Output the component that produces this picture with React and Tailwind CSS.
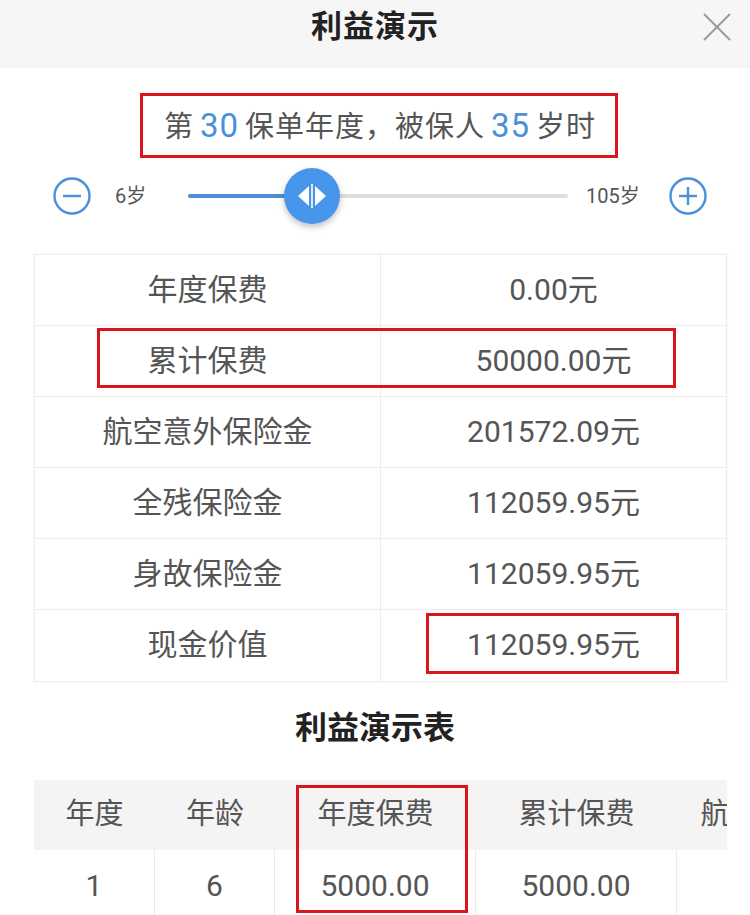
const rows = [
  ["年度保费", "0.00元"],
  ["累计保费", "50000.00元"],
  ["航空意外保险金", "201572.09元"],
  ["全残保险金", "112059.95元"],
  ["身故保险金", "112059.95元"],
  ["现金价值", "112059.95元"],
];

const cols = [
  { w: "w-[121px]", head: "年度", val: "1" },
  { w: "w-[120px]", head: "年龄", val: "6" },
  { w: "w-[201px]", head: "年度保费", val: "5000.00" },
  { w: "w-[201px]", head: "累计保费", val: "5000.00" },
  { w: "w-[250px]", head: "航空意外保险金", val: "" },
];

function CircleBtn({ plus }) {
  return (
    <svg className="shrink-0" width="40" height="40" viewBox="0 0 40 40" fill="none" stroke="#4a8fd8" strokeWidth="2.4">
      <circle cx="20" cy="20" r="17.5" />
      <line x1="11" y1="20" x2="29" y2="20" />
      {plus && <line x1="20" y1="11" x2="20" y2="29" />}
    </svg>
  );
}

export default function App() {
  return (
    <div
      className="relative w-[750px] h-[915px] overflow-hidden bg-white text-[#555]"
      style={{ fontFamily: 'Roboto, "Noto Sans CJK SC", sans-serif' }}
    >
      {/* header */}
      <div className="h-[68px] bg-[#f6f6f6] flex items-center justify-center relative">
        <h1 className="text-[31px] leading-[40px] font-bold text-[#222] tracking-[1px] -mt-[14px]">利益演示</h1>
        <svg className="absolute right-[18px] top-[12px]" width="30" height="30" viewBox="0 0 30 30" stroke="#9a9a9a" strokeWidth="2">
          <line x1="2" y1="2" x2="28" y2="28" />
          <line x1="28" y1="2" x2="2" y2="28" />
        </svg>
      </div>

      {/* summary */}
      <div className="mt-[25px] h-[64px] pl-[10px] flex items-center justify-center">
        <p className="text-[29px] leading-none tracking-[1px] whitespace-nowrap">
          第<span className="text-[#4a90d9] text-[33px] mx-[6px]">30</span>保单年度，被保人<span className="text-[#4a90d9] text-[33px] mx-[6px]">35</span>岁时
        </p>
      </div>

      {/* slider */}
      <div className="mt-[9px] flex items-center h-[60px] pl-[52px]">
        <CircleBtn />
        <span className="shrink-0 text-[20px] ml-[23px] w-[73px]">6岁</span>
        <div className="shrink-0 relative w-[380px] h-[4px] bg-[#dedede] rounded-full">
          <div className="absolute left-0 top-0 h-[4px] w-[124px] bg-[#4a8fd8] rounded-full" />
          <div className="absolute left-[96px] top-[-26px] w-[56px] h-[56px] rounded-full bg-[#4896ec] shadow-[0_3px_6px_rgba(0,0,0,0.25)] flex items-center justify-center">
            <svg width="30" height="26" viewBox="0 0 30 26" fill="white">
              <polygon points="12,3 12,23 1,13" />
              <polygon points="18,3 18,23 29,13" />
              <rect x="14.2" y="1" width="1.6" height="24" />
            </svg>
          </div>
        </div>
        <span className="shrink-0 text-[20px] ml-[18px] w-[82px]">105岁</span>
        <CircleBtn plus />
      </div>

      {/* main table */}
      <div className="mx-[34px] mt-[28px] w-[693px] border border-[#ededed] shadow-[0_0_3px_rgba(0,0,0,0.06)]">
        {rows.map(([k, v], i) => (
          <div key={k} className={`flex h-[71px] ${i < rows.length - 1 ? "border-b border-[#ededed]" : ""}`}>
            <div className="w-[346px] border-r border-[#ededed] flex items-center justify-center text-[30px] -mt-[2px]">{k}</div>
            <div className="flex-1 flex items-center justify-center text-[30px] -mt-[2px]">{v}</div>
          </div>
        ))}
      </div>

      <h2 className="text-center text-[32px] font-bold text-[#222] mt-[26px] leading-[40px]">利益演示表</h2>

      {/* detail table */}
      <div className="ml-[34px] mt-[32px] w-[693px] max-w-[693px] overflow-hidden">
        <div className="flex w-max">
          {cols.map((c) => (
            <div key={c.head} className={`${c.w} shrink-0`}>
              <div className="h-[70px] bg-[#f4f4f4] flex items-center justify-center text-[29px] whitespace-nowrap">{c.head}</div>
              <div className="h-[70px] border-r border-[#eaeaea] flex items-center justify-center text-[30px]">{c.val}</div>
            </div>
          ))}
        </div>
      </div>

      {/* red annotation boxes */}
      <div className="absolute left-[140px] top-[93px] w-[478px] h-[65px] border-[3px] border-[#d9141b]" />
      <div className="absolute left-[97px] top-[328px] w-[579px] h-[60px] border-[3px] border-[#d9141b]" />
      <div className="absolute left-[426px] top-[613px] w-[253px] h-[61px] border-[3px] border-[#d9141b]" />
      <div className="absolute left-[296px] top-[785px] w-[172px] h-[128px] border-[3px] border-[#d9141b]" />
    </div>
  );
}
